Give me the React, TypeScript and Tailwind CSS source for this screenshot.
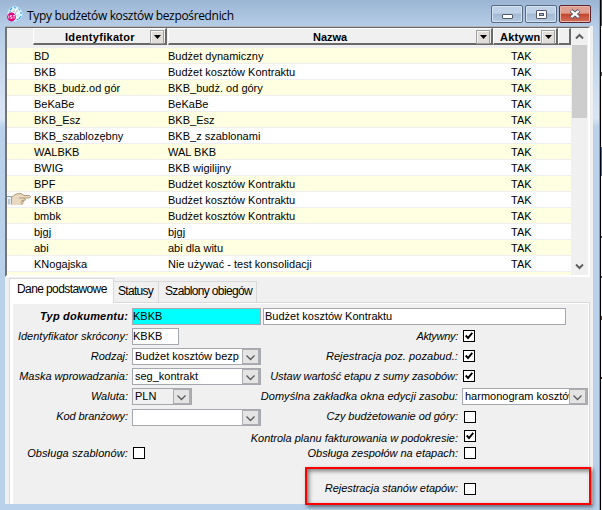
import clsx from "clsx";
import type { ReactNode } from "react";

const rows = [
  ["BD", "Budżet dynamiczny"],
  ["BKB", "Budżet kosztów Kontraktu"],
  ["BKB_budż.od gór", "BKB_budż. od góry"],
  ["BeKaBe", "BeKaBe"],
  ["BKB_Esz", "BKB_Esz"],
  ["BKB_szablozębny", "BKB_z szablonami"],
  ["WALBKB", "WAL BKB"],
  ["BWIG", "BKB wigilijny"],
  ["BPF", "Budżet kosztów Kontraktu"],
  ["KBKB", "Budżet kosztów Kontraktu"],
  ["bmbk", "Budżet kosztów Kontraktu"],
  ["bjgj", "bjgj"],
  ["abi", "abi dla witu"],
  ["KNogajska", "Nie używać - test konsolidacji"]
];

function AppIcon() {
  return (
    <svg width="16" height="16" viewBox="0 0 16 16">
      <circle cx="8" cy="8" r="7.5" fill="#e4f5fc" stroke="#a5d8f0" strokeWidth="0.8" />
      <path d="M3 4l2-2M7 1.500l2 .5M11.500 2.500l1.500 2M14 6v2M12 13l2-3M2.500 6.500l1-1.500M9.500 14l2-1" stroke="#39a8dc" strokeWidth="1.2" />
      <ellipse cx="8.500" cy="6" rx="3" ry="2.600" fill="#fff" />
      <path d="M9 9l3-1-1 3z" fill="#bfe6f6" />
      <circle cx="7" cy="5" r="0.6" fill="#246" />
      <circle cx="10" cy="5" r="0.6" fill="#246" />
      <path d="M7.500 6.500h2.500L8.700 8z" fill="#58b6df" />
      <circle cx="4.500" cy="11" r="4.400" fill="#e4087e" />
      <path d="M1.800 9.500v3M5 9.500H3.500V11H5v1.500H3.500M6 9.500h2M7 9.500v3" stroke="#fff" strokeWidth="0.8" fill="none" />
    </svg>
  );
}

function Hand() {
  return (
    <svg width="24" height="12" viewBox="0 0 24 12">
      <path d="M0 3.500h4v8H0z" fill="#e8f0f6" />
      <path d="M0 3.500h4.500M4.500 3.500v8M2 6v5.500" stroke="#8ba3b5" fill="none" />
      <path d="M5 4l4-3 5-.5 3 2h5.500l1 1-1 1.500h-5l1 2-1.500 1.500.5 1.500-2 2H5z" fill="#e9d9c0" />
      <path d="M5 4l4-3 5-.5 3 2h5.500l1 1-1 1.500H12M17.500 5l1 2-4 .5M17 8l-3.500 1.500M16 10l-2 1.500" stroke="#b09875" fill="none" />
    </svg>
  );
}

function CaptionButton({ close, children }: { close?: boolean; children: ReactNode }) {
  return (
    <div
      className={clsx(
        "flex h-[18px] w-8 items-center justify-center rounded-[2px] border",
        close
          ? "border-[#5b2630] bg-linear-to-b from-[#dfa092] from-45% via-[#c3432c] via-50% to-[#d2705b] shadow-[inset_0_0_0_1px_#e8b5aa]"
          : "border-[#5a6b80] bg-linear-to-b from-[#c0d2e7] from-45% via-[#a3b9d3] via-50% to-[#b6cce4] shadow-[inset_0_0_0_1px_#d3e2f2]"
      )}
    >
      {children}
    </div>
  );
}

function FilterButton() {
  return (
    <span className="flex h-[14px] w-[14px] shrink-0 items-center justify-center border border-[#a0a0a0] bg-[#e1ddd9] shadow-[inset_1px_1px_0_#f4f4f4]">
      <svg width="7" height="4" viewBox="0 0 7 4">
        <path d="M0 0h7L3.500 4z" fill="#000" />
      </svg>
    </span>
  );
}

function HeaderCell({ className, children }: { className: string; children?: ReactNode }) {
  return (
    <div
      className={clsx(
        "flex h-[17px] shrink-0 border-t border-r-2 border-b-2 border-l border-t-white border-r-[#696969] border-b-[#696969] border-l-white bg-[#f0f0f0] font-bold",
        className
      )}
    >
      {children}
    </div>
  );
}

function Chevron({ up }: { up?: boolean }) {
  return (
    <svg width="9" height="7" viewBox="0 0 9 7" className={clsx(up && "rotate-180")}>
      <path d="M1 1.500l3.500 3.500L8 1.500" fill="none" stroke="#606060" strokeWidth="2" />
    </svg>
  );
}

function Combo({ value, className }: { value?: string; className: string }) {
  return (
    <div className={clsx("flex h-[17px] shrink-0 border border-[#a6a8b0]", className)}>
      <span className="min-w-0 flex-1 overflow-hidden pl-0.5 leading-[14px] whitespace-nowrap">{value}</span>
      <span className="flex w-[18px] shrink-0 items-center justify-center border border-r-2 border-[#adadb1] bg-[#e4e4e4] pt-0.5">
        <svg width="9" height="6" viewBox="0 0 9 6">
          <path d="M.5.5l4 4 4-4" fill="none" stroke="#5a5a5a" strokeWidth="1.300" />
        </svg>
      </span>
    </div>
  );
}

function Checkbox({ checked, className }: { checked?: boolean; className?: string }) {
  return (
    <span className={clsx("flex size-3 shrink-0 items-center justify-center border border-black bg-white", className)}>
      {checked && (
        <svg width="8" height="8" viewBox="0 0 8 8">
          <path d="M.7 3.500l2.300 2.500L7.300.8" fill="none" stroke="#000" strokeWidth="1.900" />
        </svg>
      )}
    </span>
  );
}

function Field({ label, className, labelClass, children }: {
  label: string;
  className?: string;
  labelClass?: string;
  children: ReactNode;
}) {
  return (
    <div className={clsx("flex h-5 shrink-0 items-start", className)}>
      <span className={clsx("flex-1 text-right whitespace-nowrap italic", labelClass)}>{label}</span>
      {children}
    </div>
  );
}

function Grid() {
  return (
    <div className="flex h-[250px] w-[585px] border-t border-r-2 border-b-2 border-l-2 border-t-[#696969] border-r-white border-b-white border-l-[#747474] bg-[#f0f0f0]">
      <div className="flex w-[564px] flex-col overflow-hidden">
        <div className="flex h-5 shrink-0 bg-[#f0f0f0] pl-[26px]">
          <HeaderCell className="w-[134px] pt-px pr-px">
            <span className="flex-1 pl-[31px] leading-[14px] tracking-[0.3px]">Identyfikator</span>
            <FilterButton />
          </HeaderCell>
          <HeaderCell className="ml-px w-[325px] pt-px pr-px">
            <span className="flex-1 pl-36 leading-[14px]">Nazwa</span>
            <FilterButton />
          </HeaderCell>
          <HeaderCell className="w-[65px] pt-px pr-px">
            <span className="flex-1 pl-1.5 leading-[14px] tracking-[0.2px]">Aktywn</span>
            <FilterButton />
          </HeaderCell>
          <HeaderCell className="flex-1 border-r" />
        </div>
        {rows.map(([id, name], i) => (
          <div
            key={id}
            className={clsx("flex h-4 shrink-0 border-b border-[#efefef]", i % 2 === 0 ? "bg-[#ffffe1]" : "bg-white")}
          >
            <span className="w-[27px] pt-px">{id === "KBKB" && <Hand />}</span>
            <span className="w-[134px]">{id}</span>
            <span className="w-[343px]">{name}</span>
            <span>TAK</span>
          </div>
        ))}
        <div className="flex-1 bg-[#ffffe1]" />
      </div>
      <div className="flex flex-1 flex-col items-center bg-[#f0f0f0]">
        <span className="flex h-[17px] items-center">
          <Chevron up />
        </span>
        <span className="h-[73px] w-[15px] bg-[#cdcdcd]" />
        <span className="mt-auto flex h-[17px] items-center">
          <Chevron />
        </span>
      </div>
    </div>
  );
}

function Tabs() {
  return (
    <div className="flex h-6 items-end pl-1 text-[12px]">
      <span className="z-10 -mb-px h-[25px] w-[105px] border border-b-0 border-[#d9d9d9] bg-white pt-0.5 pl-[7px] tracking-[-0.6px] whitespace-nowrap">
        Dane podstawowe
      </span>
      <span className="h-[21px] w-[45px] border border-b-0 border-l-0 border-[#d9d9d9] pt-px pl-1 tracking-[-0.7px]">
        Statusy
      </span>
      <span className="h-[21px] w-[98px] border border-b-0 border-l-0 border-[#d9d9d9] pt-px pl-1.5 tracking-[-0.65px] whitespace-nowrap">
        Szablony obiegów
      </span>
    </div>
  );
}

function Form() {
  return (
    <div className="ml-1 h-[202px] w-[581px] border border-b-0 border-[#d9d9d9] bg-[#f0f0f0] shadow-[inset_3px_1px_0_#fff,inset_-1px_0_0_#fff]">
      <div className="flex h-[25px] pt-[5px]">
        <span className="w-[118px] text-right font-bold tracking-[0.2px] whitespace-nowrap italic">Typ dokumentu:</span>
        <span className="ml-1 h-[17px] w-[129px] border border-[#a6a8b0] bg-[#00ffff] leading-[14px]">KBKB</span>
        <span className="ml-0.5 h-[17px] w-[303px] border border-[#a6a8b0] bg-white pl-px leading-[14px]">
          Budżet kosztów Kontraktu
        </span>
      </div>
      <div className="flex">
        <div className="flex w-[251px] flex-col">
          <Field label="Identyfikator skrócony:">
            <span className="mr-[82px] ml-1 h-[17px] w-[47px] border border-[#a6a8b0] bg-white leading-[14px]">KBKB</span>
          </Field>
          <Field label="Rodzaj:">
            <Combo value="Budżet kosztów bezp" className="ml-1 w-[129px] bg-white" />
          </Field>
          <Field label="Maska wprowadzania:">
            <Combo value="seg_kontrakt" className="ml-1 w-[129px] bg-white" />
          </Field>
          <Field label="Waluta:">
            <Combo value="PLN" className="mr-[69px] ml-1 w-[60px] bg-[#f0f0f0]" />
          </Field>
          <Field label="Kod branżowy:" labelClass="tracking-[-0.07px]">
            <Combo className="mt-px ml-1 w-[129px] bg-white" />
          </Field>
          <Field label="Obsługa szablonów:" className="mt-[17px]" labelClass="tracking-[0.1px]">
            <Checkbox className="mt-0.5 mr-[116px] ml-[5px]" />
          </Field>
        </div>
        <div className="flex w-[327px] flex-col">
          <Field label="Aktywny:" labelClass="tracking-[-0.3px]">
            <Checkbox checked className="mt-0.5 mr-[113px] ml-[5px]" />
          </Field>
          <Field label="Rejestracja poz. pozabud.:" labelClass="tracking-[0.07px]">
            <Checkbox checked className="mt-0.5 mr-[113px] ml-[5px]" />
          </Field>
          <Field label="Ustaw wartość etapu z sumy zasobów:" labelClass="tracking-[-0.05px]">
            <Checkbox checked className="mt-0.5 mr-[113px] ml-[5px]" />
          </Field>
          <Field label="Domyślna zakładka okna edycji zasobu:" labelClass="-ml-2 tracking-[0.06px]">
            <Combo value="harmonogram kosztów" className="ml-1 w-[126px] bg-white" />
          </Field>
          <Field label="Czy budżetowanie od góry:" className="h-[22px]" labelClass="tracking-[-0.05px]">
            <Checkbox className="mt-[3px] mr-[112px] ml-1.5" />
          </Field>
          <Field label="Kontrola planu fakturowania w podokresie:" className="h-[15px]" labelClass="-ml-4">
            <Checkbox checked className="mr-[112px] ml-1.5" />
          </Field>
          <Field label="Obsługa zespołów na etapach:" className="h-[35px]">
            <Checkbox className="mt-0.5 mr-[112px] ml-1.5" />
          </Field>
          <Field label="Rejestracja stanów etapów:" labelClass="tracking-[-0.05px]">
            <Checkbox className="mt-[3px] mr-[112px] ml-1.5" />
          </Field>
        </div>
      </div>
    </div>
  );
}

export default function App() {
  return (
    <div className="relative flex h-[510px] w-[602px] overflow-hidden bg-white font-['Liberation_Sans',Arial,sans-serif] text-[11px] leading-4 text-black">
      <div className="flex w-[599px] flex-col bg-[linear-gradient(#9bb5d4_0,#b6cde7_26px,#dbe6f4_118px,#b9d1ea_127px)] pl-[5px]">
        <div className="-ml-[5px] flex h-[26px] pt-[5px] pr-2 pl-[7px]">
          <div className="pt-px">
            <AppIcon />
          </div>
          <span className="flex-1 pt-[3px] pl-1 font-['Open_Sans',sans-serif] text-[12px] leading-4 tracking-[-0.34px]">
            Typy budżetów kosztów bezpośrednich
          </span>
          <div className="flex gap-0.5">
            <CaptionButton>
              <span className="mt-1 h-[5px] w-[11px] rounded-[1px] border border-[#535766] bg-white" />
            </CaptionButton>
            <CaptionButton>
              <span className="flex h-[9px] w-[11px] items-center justify-center rounded-[1px] border border-[#535766] bg-white">
                <span className="h-[3px] w-[5px] border border-[#535766] bg-[#a3b9d3]" />
              </span>
            </CaptionButton>
            <CaptionButton close>
              <svg width="12" height="10" viewBox="0 0 12 10">
                <path d="M2 1.500l8 7M10 1.500l-8 7" stroke="#535766" strokeWidth="4" />
                <path d="M2.300 1.800l7.400 6.400M9.700 1.800L2.300 8.200" stroke="#fff" strokeWidth="2.200" />
              </svg>
            </CaptionButton>
          </div>
        </div>
        <div className="h-[478px] w-[588px] bg-[#f0f0f0]">
          <div className="h-px w-[585px] bg-[#b4b4b4]" />
          <Grid />
          <div className="pt-px">
            <Tabs />
          </div>
          <Form />
        </div>
      </div>
      <div className="w-px bg-[#27c3ea]" />
      <div className="w-px bg-black" />
      {/* sliver of the window behind */}
      <div className="flex w-px flex-col bg-[#f5f5f5]">
        <div className="h-[26px] bg-[#4a5560]" />
        <div className="mt-[46px] h-1 bg-[#555]" />
        <div className="mt-[71px] h-[29px] bg-[#0a7be0]" />
        <div className="mt-[60px] h-0.5 bg-[#555]" />
        <div className="mt-[38px] h-0.5 bg-[#555]" />
        <div className="mt-[38px] h-1 bg-[#7a3c2c]" />
        <div className="mt-[57px] h-0.5 bg-[#7a2020]" />
      </div>
      {/* highlighted option */}
      <div className="absolute top-[467px] left-[305px] h-[38px] w-[286px] border-2 border-[#fe0000] shadow-[2px_2px_4px_rgba(0,0,0,0.5),inset_2px_2px_4px_rgba(0,0,0,0.5)]" />
    </div>
  );
}
